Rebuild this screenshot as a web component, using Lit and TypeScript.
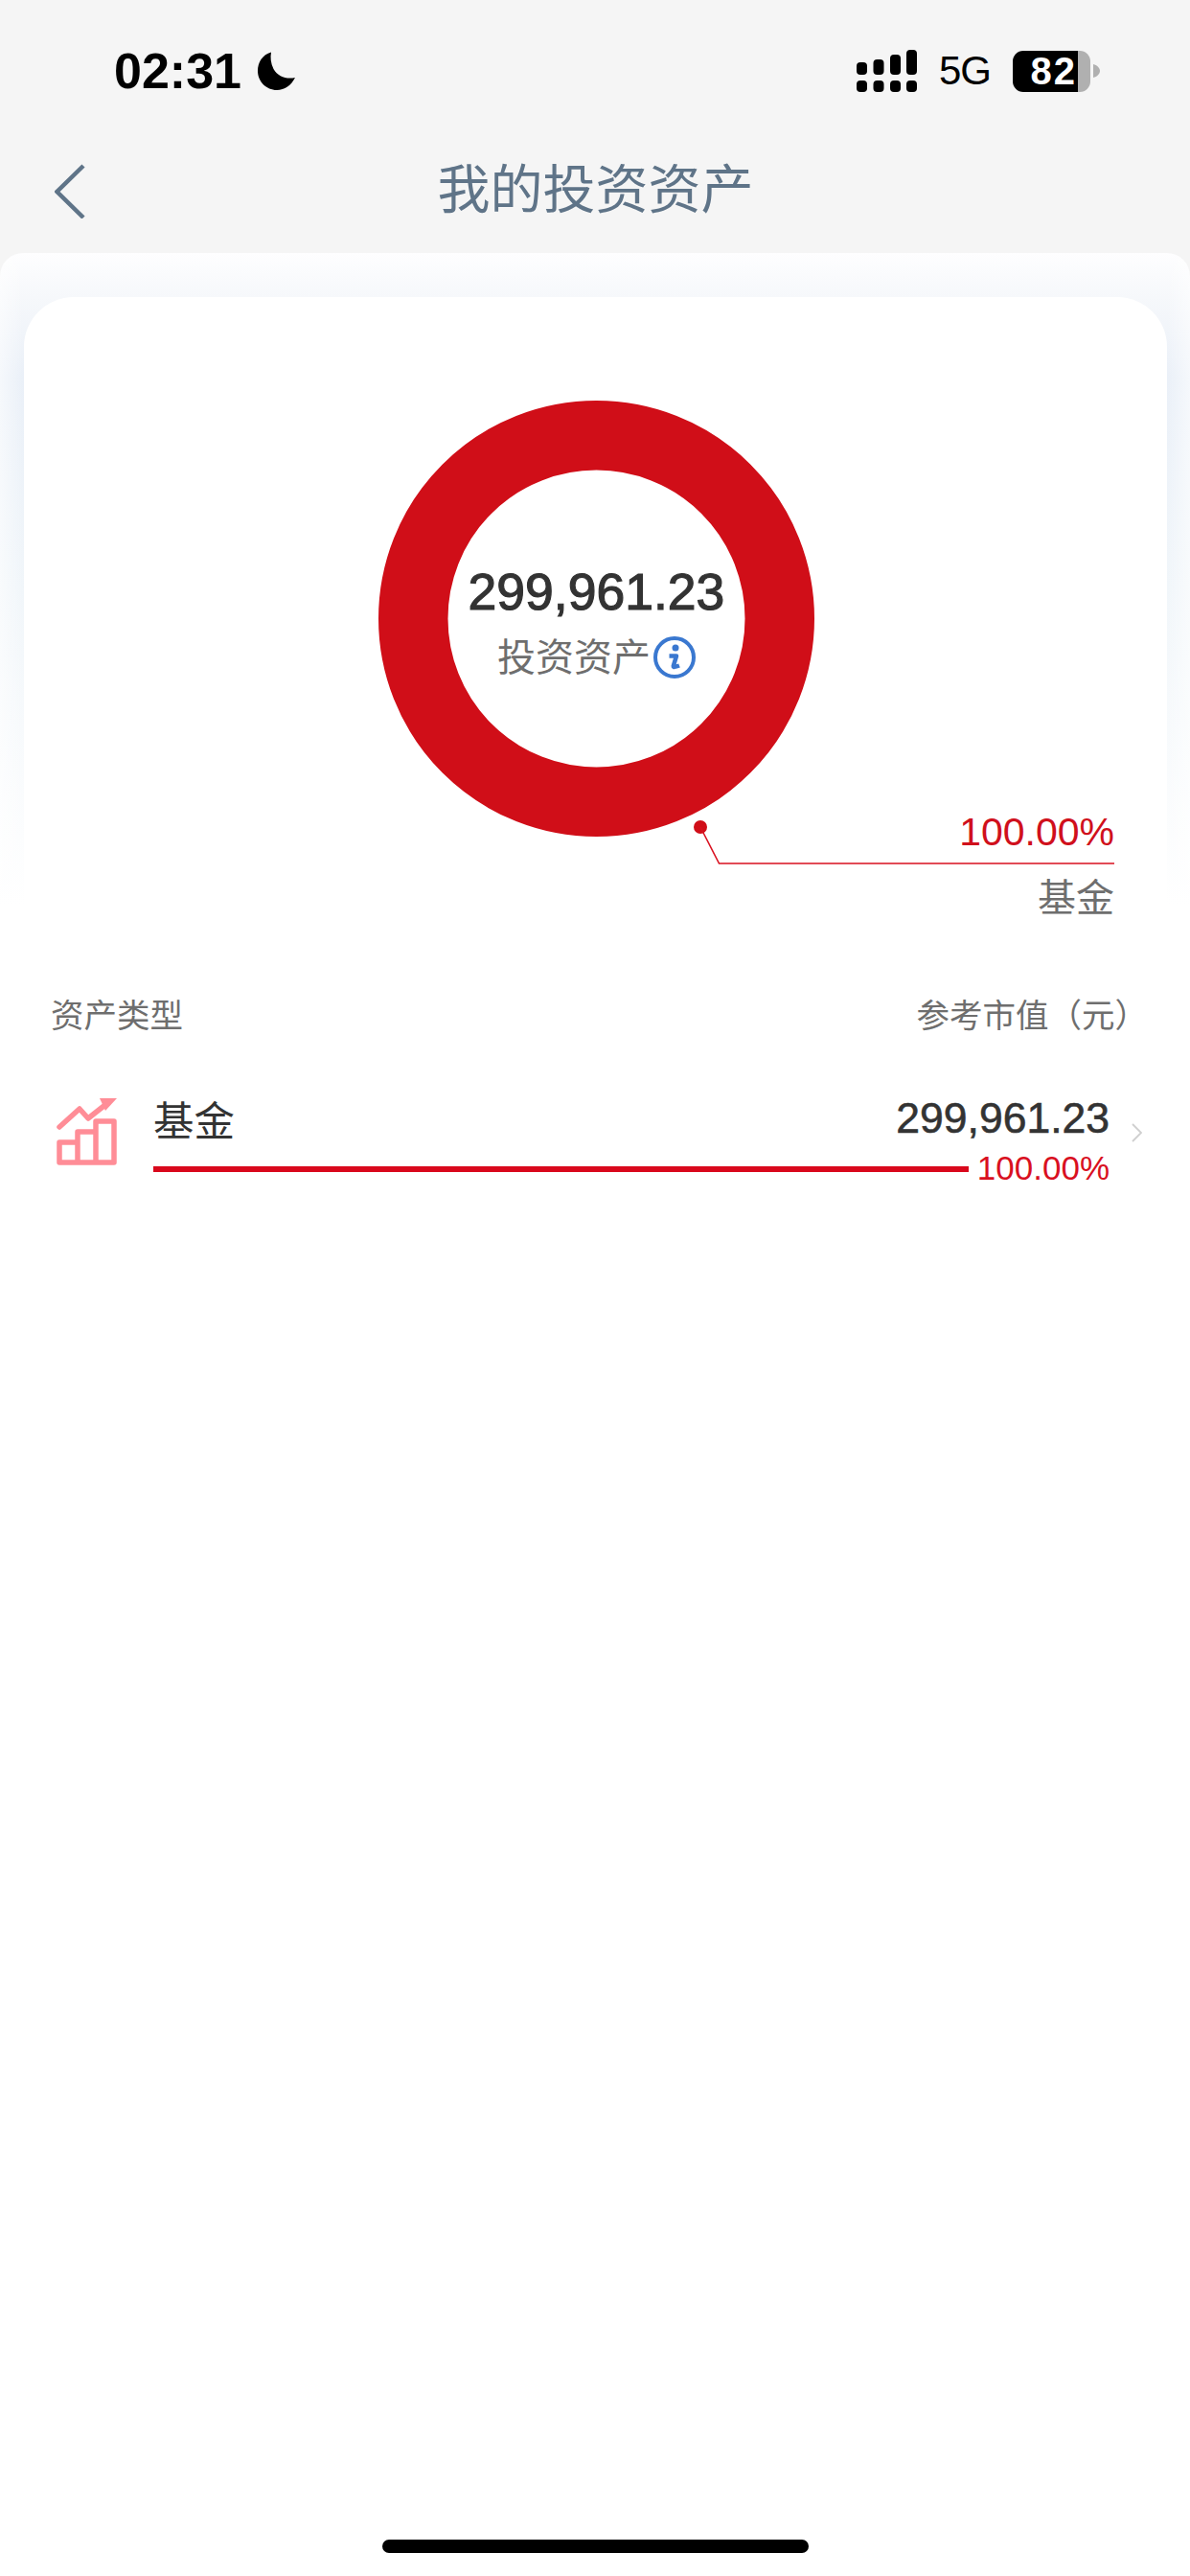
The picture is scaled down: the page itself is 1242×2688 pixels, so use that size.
import { LitElement, css, html } from "lit";
import { customElement, property } from "lit/decorators.js";

const AMOUNT = "299,961.23";
const SHARE = "100.00%";

@customElement("status-bar")
export class StatusBar extends LitElement {
  static styles = css`
    :host {
      display: flex;
      align-items: center;
      height: 148px;
      padding: 0 94px 0 119px;
      color: #000;
      font-family: "Liberation Sans", sans-serif;
    }
    .time {
      font-size: 52px;
      font-weight: 700;
      line-height: 1;
    }
    .moon {
      margin-left: 17px;
    }
    .right {
      display: flex;
      align-items: center;
      margin-left: auto;
    }
    .net {
      margin-left: 23px;
      font-size: 42px;
      letter-spacing: -1px;
      line-height: 1;
    }
    .battery {
      display: flex;
      margin-left: 23px;
      width: 81px;
      height: 43px;
      border-radius: 11px;
      background: linear-gradient(90deg, #000 68px, #b0b0b0 68px);
    }
    .level {
      width: 68px;
      padding-right: 1px;
      box-sizing: border-box;
      color: #fff;
      font-size: 40px;
      font-weight: 700;
      letter-spacing: 2px;
      line-height: 43px;
      text-align: right;
    }
    .nub {
      margin-left: 3px;
    }
  `;

  render() {
    return html`
      <span class="time">02:31</span>
      <svg class="moon" width="40" height="40" viewBox="0 0 40 40">
        <path d="M14 .5C5 3 0 11 0 20 0 31 9 40 20 40 28 40 35 35 39 27 30 29 21 26 16.500 18 13.500 12 13 6 14 .5Z" fill="#000" />
      </svg>
      <div class="right">
        <svg width="63" height="45" viewBox="0 0 63 45" fill="#000">
          <rect x="0" y="13" width="11" height="13" rx="4" />
          <rect x="17.500" y="10" width="11" height="16" rx="4" />
          <rect x="35" y="5" width="11" height="21" rx="4" />
          <rect x="52" y="0" width="11" height="26" rx="4" />
          <rect x="0" y="32" width="11" height="12" rx="4" />
          <rect x="17.500" y="32" width="11" height="12" rx="4" />
          <rect x="35" y="32" width="11" height="12" rx="4" />
          <rect x="52" y="32" width="11" height="12" rx="4" />
        </svg>
        <span class="net">5G</span>
        <div class="battery"><span class="level">82</span></div>
        <svg class="nub" width="7" height="14" viewBox="0 0 7 14">
          <path d="M0 0C4 1 7 4 7 7S4 13 0 14Z" fill="#b0b0b0" />
        </svg>
      </div>
    `;
  }
}

@customElement("asset-row")
export class AssetRow extends LitElement {
  @property() name = "";
  @property() amount = "";
  @property() share = "";
  @property({ type: Number }) ratio = 1;

  static styles = css`
    :host {
      display: flex;
      align-items: flex-start;
      padding: 0 0 0 59px;
      font-family: "Liberation Sans", "Noto Sans CJK SC", sans-serif;
    }
    .icon {
      flex: none;
      margin-top: 18px;
    }
    .main {
      width: 998px;
      margin-left: 37px;
    }
    .top {
      display: flex;
      justify-content: space-between;
      align-items: center;
      height: 80px;
      color: #333;
    }
    .name {
      margin-top: -2px;
      font-size: 42.500px;
    }
    .amount {
      font-size: 44.500px;
      -webkit-text-stroke: 0.6px #333;
    }
    .bottom {
      display: flex;
      align-items: center;
      height: 30px;
      margin-top: -2px;
    }
    .track {
      flex: 1;
    }
    .bar {
      height: 6px;
      background: #d9081c;
    }
    .share {
      margin: -2px 0 0 9px;
      color: #d9101f;
      font-size: 35px;
      line-height: 30px;
    }
    .more {
      flex: none;
      margin: 45px 0 0 23px;
    }
  `;

  render() {
    return html`
      <svg class="icon" width="64" height="72" viewBox="0 0 64 72" fill="none" stroke="#ff8d97" stroke-width="5.500" stroke-linejoin="round" stroke-linecap="round">
        <path d="M3 47H22V36H41V25H60V68H3ZM22 47V68M41 36V68" />
        <path d="M3 31 24 12 33 22 52 7" />
        <path d="M45 1H63L51 14Z" fill="#ff8d97" stroke="none" />
      </svg>
      <div class="main">
        <div class="top">
          <span class="name">${this.name}</span>
          <span class="amount">${this.amount}</span>
        </div>
        <div class="bottom">
          <div class="track"><div class="bar" style="width:${this.ratio * 100}%"></div></div>
          <span class="share">${this.share}</span>
        </div>
      </div>
      <svg class="more" width="11" height="20" viewBox="0 0 11 20" fill="none" stroke="#cfcfcf" stroke-width="1.800">
        <path d="M1 1 10 10 1 19" />
      </svg>
    `;
  }
}

@customElement("app-root")
export class AppRoot extends LitElement {
  static styles = css`
    :host {
      display: flex;
      flex-direction: column;
      min-height: 2688px;
      background: #fff;
      font-family: "Liberation Sans", "Noto Sans CJK SC", sans-serif;
    }
    .head {
      background: #f5f5f5;
    }
    .nav {
      display: grid;
      grid-template-columns: 1fr auto 1fr;
      align-items: center;
      height: 100px;
      padding: 0 0 16px 57px;
      color: #5f7488;
    }
    .title {
      font-size: 55px;
      line-height: 1;
      transform: translateX(-28px);
    }
    .sheet-top {
      background: #f5f5f5;
    }
    .panel {
      padding: 46px 24px 0 25px;
      border-radius: 24px 24px 0 0;
      background:
        linear-gradient(90deg, rgba(255, 255, 255, 0.55) 0, rgba(255, 255, 255, 0) 24px, rgba(255, 255, 255, 0) calc(100% - 24px), rgba(255, 255, 255, 0.55) 100%),
        linear-gradient(180deg, #fefeff 0, #f6f8fb 46px, #eaf0f8 130px, #f1f6fa 350px, #fff 681px);
    }
    .card {
      position: relative;
      height: 635px;
      border-radius: 52px 52px 0 0;
      background: #fff;
    }
    .chart {
      position: absolute;
      inset: 0;
    }
    .center {
      position: absolute;
      left: 2px;
      right: 0;
      top: 276px;
      display: flex;
      flex-direction: column;
      align-items: center;
    }
    .total {
      color: #333;
      font-size: 53.500px;
      line-height: 64px;
      -webkit-text-stroke: 1.200px #333;
    }
    .caption {
      display: flex;
      align-items: center;
      gap: 3px;
      margin-top: 12px;
      color: #6e6e6e;
      font-size: 40px;
      line-height: 48px;
    }
    .callout {
      position: absolute;
      right: 55px;
      top: 534px;
      text-align: right;
    }
    .callout-share {
      color: #d0101c;
      font-size: 41px;
      line-height: 48px;
    }
    .callout-name {
      margin-top: 21px;
      color: #6e6e6e;
      font-size: 40px;
      line-height: 48px;
    }
    .columns {
      display: flex;
      justify-content: space-between;
      margin-top: 93px;
      padding: 0 44px 0 53px;
      color: #6e6e6e;
      font-size: 34.500px;
      line-height: 44px;
    }
    asset-row {
      margin-top: 45px;
    }
    .home {
      width: 445px;
      height: 14px;
      margin: auto auto 24px;
      border-radius: 7px;
      background: #000;
    }
  `;

  render() {
    return html`
      <div class="head">
        <status-bar></status-bar>
        <div class="nav">
          <svg width="32" height="60" viewBox="0 0 32 60" fill="none" stroke="#5f7488" stroke-width="4.500">
            <path d="M30 5 2.500 32 30 59" />
          </svg>
          <span class="title">我的投资资产</span>
        </div>
      </div>
      <div class="sheet-top">
        <div class="panel">
          <div class="card">
            <svg class="chart" width="1193" height="635" viewBox="0 0 1193 635" fill="none">
              <circle cx="597.500" cy="335.500" r="191.250" stroke="#d00e18" stroke-width="72.500" />
              <circle cx="706" cy="553" r="7" fill="#d00e18" />
              <path d="M706 553 725.500 591H1138" stroke="#d9101f" stroke-width="1.600" />
            </svg>
            <div class="center">
              <span class="total">${AMOUNT}</span>
              <span class="caption">
                投资资产
                <svg width="44" height="44" viewBox="0 0 44 44" fill="none">
                  <circle cx="22" cy="22" r="20" stroke="#3a78d0" stroke-width="4" />
                  <circle cx="23" cy="12" r="3.500" fill="#3a78d0" />
                  <path d="M16.500 20.500H24L20.800 31Q20.500 33 27 30.500" stroke="#3a78d0" stroke-width="4.500" stroke-linejoin="round" />
                </svg>
              </span>
            </div>
            <div class="callout">
              <div class="callout-share">${SHARE}</div>
              <div class="callout-name">基金</div>
            </div>
          </div>
        </div>
      </div>
      <div class="columns">
        <span>资产类型</span>
        <span>参考市值（元）</span>
      </div>
      <asset-row name="基金" amount=${AMOUNT} share=${SHARE} ratio="1"></asset-row>
      <div class="home"></div>
    `;
  }
}
